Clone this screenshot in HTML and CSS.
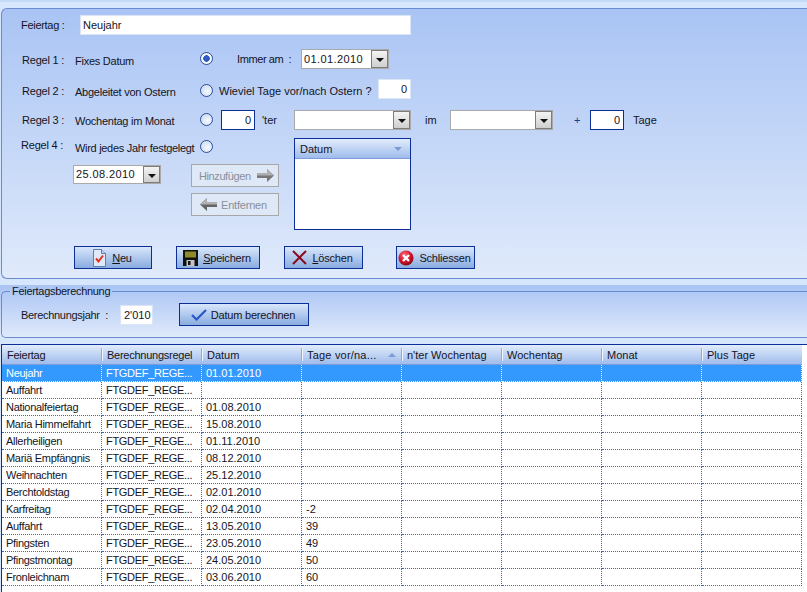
FILE: index.html
```html
<!DOCTYPE html>
<html lang="de">
<head>
<meta charset="utf-8">
<title>Feiertage</title>
<link rel="stylesheet" href="styles.css">
</head>
<body>
<div class="page">
  <section class="panel">
    <div class="row row-name">
      <span class="lbl lbl-name">Feiertag :</span>
      <span class="field field-name">Neujahr</span>
    </div>
    <div class="row row-r1">
      <span class="lbl lbl-regel">Regel 1 :</span>
      <span class="lbl lbl-desc">Fixes Datum</span>
      <span class="radio checked"></span>
      <span class="lbl lbl-immer">Immer am&nbsp; :</span>
      <span class="combo combo-date"><span class="combo-text">01.01.2010</span><span class="drop"></span></span>
    </div>
    <div class="row row-r2">
      <span class="lbl lbl-regel">Regel 2 :</span>
      <span class="lbl lbl-desc">Abgeleitet von Ostern</span>
      <span class="radio"></span>
      <span class="lbl lbl-wieviel">Wieviel Tage vor/nach Ostern ?</span>
      <span class="field field-num field-plain">0</span>
    </div>
    <div class="row row-r3">
      <span class="lbl lbl-regel">Regel 3 :</span>
      <span class="lbl lbl-desc">Wochentag im Monat</span>
      <span class="radio"></span>
      <span class="field field-num field-blue field-nth">0</span>
      <span class="lbl lbl-ter">'ter</span>
      <span class="combo combo-week"><span class="combo-text"></span><span class="drop"></span></span>
      <span class="lbl lbl-im">im</span>
      <span class="combo combo-month"><span class="combo-text"></span><span class="drop"></span></span>
      <span class="lbl lbl-plus">+</span>
      <span class="field field-num field-blue field-plus">0</span>
      <span class="lbl lbl-tage">Tage</span>
    </div>
    <div class="r4">
      <div class="r4-left">
        <div class="row row-r4">
          <span class="lbl lbl-regel4">Regel 4 :</span>
          <span class="lbl lbl-wird">Wird jedes Jahr festgelegt</span>
          <span class="radio radio-r4"></span>
        </div>
        <div class="r4-body">
          <span class="combo combo-r4"><span class="combo-text">25.08.2010</span><span class="drop"></span></span>
          <div class="move-btns">
            <span class="btn-off btn-add">Hinzufügen
              <svg class="arrow" width="17" height="13" viewBox="0 0 17 13"><path d="M0 4h10V0l7 6.5-7 6.5V9H0z" fill="#777"/><path d="M0 4h10V0l7 6.5H0z" fill="#b0b0b0"/></svg>
            </span>
            <span class="btn-off btn-del">
              <svg class="arrow" width="17" height="13" viewBox="0 0 17 13"><path d="M17 4H7V0L0 6.5 7 13V9h10z" fill="#666"/><path d="M17 4H7V0L0 6.5h17z" fill="#b0b0b0"/></svg>
              Entfernen
            </span>
          </div>
        </div>
      </div>
      <div class="listbox">
        <div class="listbox-head">Datum<span class="tri-down"></span></div>
      </div>
    </div>
    <div class="actions">
      <button class="btn btn-neu" type="button">
        <svg width="15" height="18" viewBox="0 0 15 18"><path d="M1.5.5h8l4 4v13h-12z" fill="#dfe9f8" stroke="#5f7fae"/><path d="M9.5.5v4h4" fill="#c0d2ec" stroke="#5f7fae"/><path d="M4 9.5l2.5 3L11 6.5" fill="none" stroke="#e0301e" stroke-width="2"/></svg>
        <span><u>N</u>eu</span>
      </button>
      <button class="btn btn-save" type="button">
        <svg width="15" height="16" viewBox="0 0 15 16"><path d="M0 0h15v16H0z" fill="#111"/><path d="M2 1.5h11v6H2z" fill="#8f8a2c"/><path d="M3.5 10h8v6h-8z" fill="#c4c4c4"/><path d="M5 11h2.5v4H5z" fill="#111"/></svg>
        <span><u>S</u>peichern</span>
      </button>
      <button class="btn btn-del-rec" type="button">
        <svg width="15" height="15" viewBox="0 0 15 15"><path d="M1 1l13 13M14 1L1 14" stroke="#8b0a1c" stroke-width="2" fill="none"/></svg>
        <span><u>L</u>öschen</span>
      </button>
      <button class="btn btn-close" type="button">
        <svg width="16" height="16" viewBox="0 0 16 16"><defs><radialGradient id="ball" cx="40%" cy="30%" r="75%"><stop offset="0" stop-color="#f8707a"/><stop offset=".55" stop-color="#d8132a"/><stop offset="1" stop-color="#7c0a14"/></radialGradient></defs><circle cx="8" cy="8" r="7.5" fill="url(#ball)"/><path d="M5 5l6 6M11 5l-6 6" stroke="#fff" stroke-width="2.4"/></svg>
        <span>Schliessen</span>
      </button>
    </div>
  </section>

  <div class="calc-band">
    <fieldset class="calc">
      <legend>Feiertagsberechnung</legend>
      <div class="row row-calc">
        <span class="lbl lbl-year">Berechnungsjahr&nbsp; :</span>
        <span class="field field-year">2'010</span>
        <button class="btn btn-calc" type="button">
          <svg width="16" height="12" viewBox="0 0 16 12"><path d="M1 6l4.5 4.5L15 1" fill="none" stroke="#2b57c8" stroke-width="2.2"/></svg>
          <span>Datum berechnen</span>
        </button>
      </div>
    </fieldset>
  </div>

  <div class="grid-wrap">
    <table class="grid">
      <thead>
        <tr>
          <th class="th-tight">Feiertag</th><th class="th-tight">Berechnungsregel</th><th>Datum</th>
          <th class="sorted">Tage vor/na...<span class="tri-up"></span></th>
          <th>n'ter Wochentag</th><th>Wochentag</th><th>Monat</th><th>Plus Tage</th>
        </tr>
      </thead>
      <tbody>
        <tr class="sel"><td>Neujahr</td><td>FTGDEF_REGE...</td><td>01.01.2010</td><td></td><td></td><td></td><td></td><td></td></tr>
        <tr><td>Auffahrt</td><td>FTGDEF_REGE...</td><td></td><td></td><td></td><td></td><td></td><td></td></tr>
        <tr><td>Nationalfeiertag</td><td>FTGDEF_REGE...</td><td>01.08.2010</td><td></td><td></td><td></td><td></td><td></td></tr>
        <tr><td>Maria Himmelfahrt</td><td>FTGDEF_REGE...</td><td>15.08.2010</td><td></td><td></td><td></td><td></td><td></td></tr>
        <tr><td>Allerheiligen</td><td>FTGDEF_REGE...</td><td>01.11.2010</td><td></td><td></td><td></td><td></td><td></td></tr>
        <tr><td>Mariä Empfängnis</td><td>FTGDEF_REGE...</td><td>08.12.2010</td><td></td><td></td><td></td><td></td><td></td></tr>
        <tr><td>Weihnachten</td><td>FTGDEF_REGE...</td><td>25.12.2010</td><td></td><td></td><td></td><td></td><td></td></tr>
        <tr><td>Berchtoldstag</td><td>FTGDEF_REGE...</td><td>02.01.2010</td><td></td><td></td><td></td><td></td><td></td></tr>
        <tr><td>Karfreitag</td><td>FTGDEF_REGE...</td><td>02.04.2010</td><td>-2</td><td></td><td></td><td></td><td></td></tr>
        <tr><td>Auffahrt</td><td>FTGDEF_REGE...</td><td>13.05.2010</td><td>39</td><td></td><td></td><td></td><td></td></tr>
        <tr><td>Pfingsten</td><td>FTGDEF_REGE...</td><td>23.05.2010</td><td>49</td><td></td><td></td><td></td><td></td></tr>
        <tr><td>Pfingstmontag</td><td>FTGDEF_REGE...</td><td>24.05.2010</td><td>50</td><td></td><td></td><td></td><td></td></tr>
        <tr><td>Fronleichnam</td><td>FTGDEF_REGE...</td><td>03.06.2010</td><td>60</td><td></td><td></td><td></td><td></td></tr>
      </tbody>
    </table>
  </div>
</div>
</body>
</html>
```

FILE: styles.css
```css
* { box-sizing: border-box; }
html, body { margin: 0; padding: 0; }
body {
  width: 807px;
  height: 592px;
  overflow: hidden;
  background: #d5e6fd;
  font: 11px/14px "Liberation Sans", Arial, sans-serif;
  color: #14141e;
}
.page {
  display: flex;
  flex-direction: column;
  height: 592px;
  border-top: 2px solid #c5daf6;
  padding-top: 6px;
}
.panel {
  height: 271px;
  margin-left: 1px;
  padding-top: 6px;
  border: 1px solid #6b8bd0;
  border-right: 0;
  border-radius: 6px 0 0 6px;
  background: linear-gradient(#a9c4f4, #e0eafb);
}
.row { display: flex; align-items: center; }
.lbl { white-space: nowrap; }

.row-name { height: 20px; }
.lbl-name { margin-left: 19px; width: 59px; letter-spacing: -.3px; }
.field {
  display: block;
  height: 20px;
  line-height: 18px;
  padding: 0 3px;
  background: #fff;
  border: 1px solid #dbe5f5;
  white-space: nowrap;
}
.field-name { width: 331px; padding-left: 2px; }
.field-num { text-align: right; }
.field-plain { width: 33px; }
.field-blue { border-color: #0b2f96; }
.field-nth { width: 34px; margin-left: 8px; }
.field-plus { width: 34px; margin-left: 10px; }

.row-r1, .row-r2, .row-r3 { height: 20px; }
.row-r1 { margin-top: 14px; }
.row-r2 { margin-top: 10px; }
.row-r3 { margin-top: 11px; }

.lbl-regel { margin-left: 20px; width: 53px; margin-top: 1px; letter-spacing: -.2px; }
.lbl-regel4 { margin-left: 19px; width: 54px; margin-top: -5px; letter-spacing: -.2px; }
.lbl-desc { width: 125px; margin-top: 3px; letter-spacing: -.25px; }
.row-r2 .lbl-regel { margin-top: 3px; }
.row-r2 .lbl-desc { margin-top: 5px; }
.row-r3 .lbl-regel { margin-top: -1px; }
.row-r3 .lbl-desc { margin-top: 1px; }
.radio {
  flex: none;
  width: 13px;
  height: 13px;
  border: 1px solid #2d4c9c;
  border-radius: 50%;
  background: radial-gradient(circle at 60% 60%, #f5f8fe, #c4d5f0);
  margin-top: -1px;
}
.row-r2 .radio { margin-top: 2px; }
.radio.checked { background: radial-gradient(circle, #2f5cc0 0 3px, #f3f6fd 3.6px); }
.lbl-immer { margin-left: 24px; width: 64px; letter-spacing: -.4px; }
.lbl-wieviel { margin-left: 6px; width: 159px; margin-top: 3px; }
.lbl-ter { margin-left: 7px; width: 32px; }
.lbl-im { margin-left: 14px; width: 25px; }
.lbl-plus { margin-left: 21px; width: 6px; color: #1c3e8e; }
.lbl-tage { margin-left: 9px; }

.combo {
  display: flex;
  height: 20px;
  background: #fff;
  border: 1px solid #a9a9a9;
}
.combo-text {
  flex: 1;
  padding-left: 2px;
  line-height: 18px;
  letter-spacing: .4px;
  white-space: nowrap;
}
.combo-date { width: 88px; margin-left: 0; }
.combo-week { width: 117px; }
.combo-month { width: 103px; }
.combo-r4 { width: 88px; height: 19px; flex: none; }
.combo-r4 .combo-text { line-height: 17px; }
.drop {
  position: relative;
  flex: none;
  width: 17px;
  border: 1px solid #7d7d7d;
  background: linear-gradient(#f4f4f4, #cfcfcf);
}
.drop::after {
  content: "";
  position: absolute;
  left: 4px;
  top: 7px;
  border: 4px solid transparent;
  border-top-color: #111;
  border-bottom: 0;
}

.r4 { display: flex; margin-top: 8px; height: 92px; }
.r4-left { width: 292px; }
.row-r4 { height: 18px; }
.lbl-wird { width: 125px; margin-top: 1px; letter-spacing: -.3px; }
.radio-r4 { margin-top: -2px; }
.r4-body { display: flex; margin-top: 9px; padding-left: 71px; }
.move-btns { display: flex; flex-direction: column; gap: 6px; margin-left: 30px; margin-top: -1px; }
.btn-off {
  display: flex;
  align-items: center;
  width: 88px;
  height: 23px;
  color: #8a8f98;
  background: #dfe8f6;
  border: 1px solid #a7a7a7;
  white-space: nowrap;
}
.btn-add { padding-left: 7px; gap: 6px; letter-spacing: -.4px; }
.btn-del { padding-left: 8px; gap: 4px; letter-spacing: -.2px; }
.arrow { flex: none; }

.listbox {
  width: 117px;
  height: 92px;
  background: #fff;
  border: 1px solid #0b2f96;
}
.listbox-head {
  display: flex;
  align-items: center;
  justify-content: space-between;
  height: 20px;
  padding: 0 8px 0 5px;
  background: linear-gradient(#e2ecfc, #9fbcec);
  border-bottom: 1px solid #7e9bdc;
}
.tri-down { border: 4px solid transparent; border-top-color: #7d9ad6; border-bottom: 0; }

.actions { display: flex; margin-top: 16px; padding-left: 72px; }
.btn {
  display: flex;
  align-items: center;
  justify-content: center;
  gap: 5px;
  height: 23px;
  padding: 0 2px 0 0;
  font: inherit;
  letter-spacing: -.2px;
  color: inherit;
  background: linear-gradient(#d8e6fb, #8aacdf);
  border: 1px solid #0b2f96;
}
.btn-neu { width: 78px; }
.btn-save { width: 84px; margin-left: 24px; }
.btn-del-rec { width: 79px; margin-left: 24px; }
.btn-close { width: 79px; margin-left: 33px; }

.calc-band {
  margin-top: 6px;
  height: 53px;
  padding-left: 1px;
  background: linear-gradient(#a9c4f4 0, #e0eafb 100%);
}
.calc {
  margin: 0;
  padding: 0;
  height: 53px;
  min-width: 0;
  border: 1px solid #6b8bd0;
  border-right: 0;
  border-radius: 5px 0 0 5px;
}
.calc legend {
  margin-left: 8px;
  padding: 0 2px;
  line-height: 12px;
  letter-spacing: -.3px;
}
.row-calc { margin-top: 6px; }
.lbl-year { margin-left: 19px; width: 99px; letter-spacing: -.3px; }
.field-year { width: 33px; padding: 0 1px 0 3px; }
.btn-calc { width: 130px; margin-left: 26px; gap: 4px; }

.grid-wrap {
  flex: 1;
  margin-top: 6px;
  margin-left: 1px;
  background: #fff;
  border-top: 1px solid #0b2f96;
  border-left: 1px solid #0b2f96;
  overflow: hidden;
}
.grid {
  width: 800px;
  table-layout: fixed;
  border-collapse: separate;
  border-spacing: 0;
}
.grid th {
  position: relative;
  height: 20px;
  padding: 0 0 0 5px;
  font-weight: normal;
  text-align: left;
  white-space: nowrap;
  background: linear-gradient(#e2ecfc, #9fbcec);
  border-bottom: 1px solid #7e9bdc;
}
.grid .th-tight { letter-spacing: -.25px; }
.grid .sorted { letter-spacing: .2px; }
.grid th + th::before {
  content: "";
  position: absolute;
  left: 0;
  top: 3px;
  bottom: 3px;
  width: 1px;
  background: #f2f6fe;
  box-shadow: -1px 0 0 #8ea9dd;
}
.tri-up {
  position: absolute;
  right: 6px;
  top: 8px;
  border: 4px solid transparent;
  border-bottom-color: #7d9ad6;
  border-top: 0;
}
.grid td {
  height: 17px;
  padding: 0 0 0 4px;
  line-height: 15px;
  white-space: nowrap;
  overflow: hidden;
  border-bottom: 1px dotted #3f68bd;
  border-right: 1px dotted #3f68bd;
}
.grid td:nth-child(-n+2) { letter-spacing: -.3px; }
.grid .sel td {
  background: #3399ff;
  color: #fff;
  border-color: #fff;
}
```
